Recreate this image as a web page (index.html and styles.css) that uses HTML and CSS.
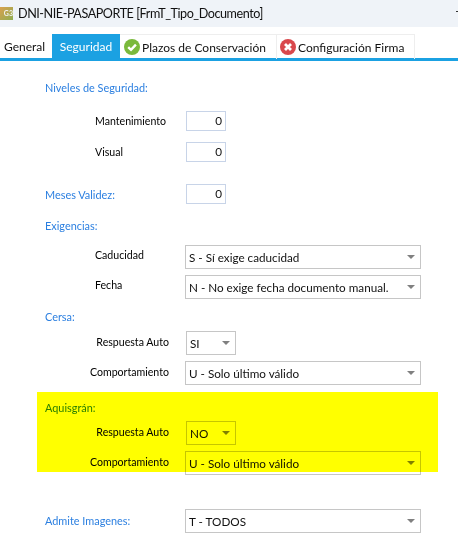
FILE: index.html
```html
<!DOCTYPE html>
<html lang="es">
<head>
    <meta charset="UTF-8">
    <meta name="viewport" content="width=device-width, initial-scale=1.0">
    <title>DNI-NIE-PASAPORTE [FrmT_Tipo_Documento]</title>
    <link rel="stylesheet" href="styles.css">
</head>
<body>
    <div class="titlebar">
        <span class="app-logo">G3</span>
        <span class="title-text">DNI-NIE-PASAPORTE [FrmT_Tipo_Documento]</span>
        <span class="min-btn"></span>
    </div>

    <div class="tabs">
        <div class="tab tab-general">General</div>
        <div class="tab tab-active">Seguridad</div>
        <div class="tab tab-plazos">
            <svg class="tab-icon" viewBox="0 0 16 16">
                <circle cx="8" cy="8" r="8" fill="#7ab93c"/>
                <path d="M4.2 8.2 L7 10.9 L11.9 5.6" fill="none" stroke="#fff" stroke-width="2.4"/>
            </svg>
            Plazos de Conservación
        </div>
        <div class="tab tab-firma">
            <svg class="tab-icon" viewBox="0 0 16 16">
                <circle cx="8" cy="8" r="8" fill="#d9484c"/>
                <path d="M5 5 L11 11 M11 5 L5 11" fill="none" stroke="#fff" stroke-width="2.8"/>
            </svg>
            Configuración Firma
        </div>
    </div>

    <div class="form">
        <div class="section-label niveles">Niveles de Seguridad:</div>
        <div class="row row-mant">
            <label class="field-label">Mantenimiento</label>
            <div class="num-input">0</div>
        </div>
        <div class="row row-visual">
            <label class="field-label">Visual</label>
            <div class="num-input">0</div>
        </div>

        <div class="row row-meses">
            <label class="section-label">Meses Validez:</label>
            <div class="num-input">0</div>
        </div>

        <div class="section-label exigencias">Exigencias:</div>
        <div class="row row-sel row-caducidad">
            <label class="field-label raised">Caducidad</label>
            <div class="select">S - Sí exige caducidad<span class="arrow"></span></div>
        </div>
        <div class="row row-sel">
            <label class="field-label raised">Fecha</label>
            <div class="select">N - No exige fecha documento manual.<span class="arrow"></span></div>
        </div>

        <div class="section-label cersa">Cersa:</div>
        <div class="row row-sel">
            <label class="field-label right">Respuesta Auto</label>
            <div class="select small">SI<span class="arrow"></span></div>
        </div>
        <div class="row row-sel">
            <label class="field-label right">Comportamiento</label>
            <div class="select">U - Solo último válido<span class="arrow"></span></div>
        </div>

        <div class="section-label aquisgran">Aquisgrán:</div>
        <div class="row row-sel">
            <label class="field-label right">Respuesta Auto</label>
            <div class="select small">NO<span class="arrow"></span></div>
        </div>
        <div class="row row-sel">
            <label class="field-label right">Comportamiento</label>
            <div class="select">U - Solo último válido<span class="arrow"></span></div>
        </div>

        <div class="row row-sel row-admite">
            <label class="section-label">Admite Imagenes:</label>
            <div class="select">T - TODOS<span class="arrow"></span></div>
        </div>

        <div class="highlight"></div>
    </div>
</body>
</html>
```

FILE: styles.css
```css
:root {
    --label-blue: #2b7fe0;
    --tab-blue: #1ba1e2;
    --input-border: #c8d4e8;
    --select-border: #c6c6c6;
}

* {
    box-sizing: border-box;
    margin: 0;
    padding: 0;
}

body {
    font-family: "Lato", "Open Sans", sans-serif;
    font-size: 11.7px;
    color: #111;
    background: white;
    overflow: hidden;
    height: 533px;
}

.titlebar {
    height: 27px;
    background-color: #eff3f8;
    display: flex;
    align-items: center;
    position: relative;
}

.app-logo {
    width: 13px;
    height: 13px;
    background: linear-gradient(135deg, #d9a04e, #8fae52);
    color: #f2f2f2;
    font-size: 7px;
    font-weight: bold;
    line-height: 13px;
    text-align: right;
    overflow: hidden;
}

.title-text {
    margin-left: 5px;
    font-size: 12.6px;
    letter-spacing: -0.45px;
    color: #111;
}

.min-btn {
    position: absolute;
    right: 0;
    top: 11px;
    width: 2px;
    height: 1px;
    background: #333;
}

.tabs {
    margin-top: 7px;
    height: 27px;
    display: flex;
    border-bottom: 3px solid var(--tab-blue);
}

.tab {
    display: flex;
    align-items: center;
    height: 25px;
    white-space: nowrap;
    font-size: 12px;
}

.tab-general {
    width: 52px;
    padding-left: 4px;
}

.tab-active {
    width: 68px;
    justify-content: center;
    color: white;
    background-color: var(--tab-blue);
}

.tab-plazos {
    width: 156px;
    padding-left: 4px;
    border-top: 1px solid #eeeeee;
}

.tab-firma {
    width: 139px;
    padding-left: 3px;
    border: 1px solid #eeeeee;
    border-bottom: none;
}

.tab-icon {
    width: 16px;
    height: 16px;
    margin-right: 2px;
}

.form {
    position: relative;
    padding-left: 45px;
}

.section-label {
    color: var(--label-blue);
    line-height: 16px;
    font-size: 10.9px;
}

.niveles { margin-top: 19px; }
.exigencias { margin-top: 14px; }
.cersa { margin-top: 10px; }
.aquisgran { margin-top: 15px; }

.row {
    display: flex;
    align-items: center;
}

.row-mant { margin-top: 15px; }
.row-visual { margin-top: 11px; }
.row-meses { margin-top: 22px; }

.field-label {
    width: 50px;
    margin-left: 50px;
    white-space: nowrap;
    font-size: 10.6px;
    color: #000;
}

.field-label.raised {
    padding-bottom: 4px;
}

.row .section-label {
    width: 141px;
}

.row .num-input {
    margin-left: 41px;
}

.row-meses .section-label {
    padding-top: 2px;
}

.row-meses .num-input {
    margin-left: 0;
}

.num-input {
    width: 40px;
    height: 20px;
    border: 1px solid var(--input-border);
    text-align: right;
    padding-right: 3px;
    line-height: 16px;
}

.row-sel {
    height: 24px;
    margin-top: 6px;
}

.aquisgran + .row-sel { margin-top: 5px; }
.row-caducidad { margin-top: 11px; }
.row-admite { margin-top: 34px; }

.select {
    position: relative;
    width: 236px;
    height: 24px;
    margin-left: 40px;
    padding-left: 3px;
    border: 1px solid var(--select-border);
    line-height: 23px;
}

.row-admite .select {
    margin-left: -1px;
}

.field-label.right {
    text-align: right;
    width: 124px;
    margin-left: 0;
    padding-bottom: 2px;
}

.field-label.right + .select {
    margin-left: 16px;
}

.field-label.right + .select.small {
    width: 50px;
    margin-left: 17px;
}

.arrow {
    position: absolute;
    right: 5px;
    top: 9px;
    width: 0;
    height: 0;
    border-left: 4px solid transparent;
    border-right: 4px solid transparent;
    border-top: 4px solid #808080;
}

.highlight {
    position: absolute;
    left: 37px;
    top: 312px;
    width: 401px;
    height: 80px;
    background: #ffff00;
    mix-blend-mode: multiply;
}
```
